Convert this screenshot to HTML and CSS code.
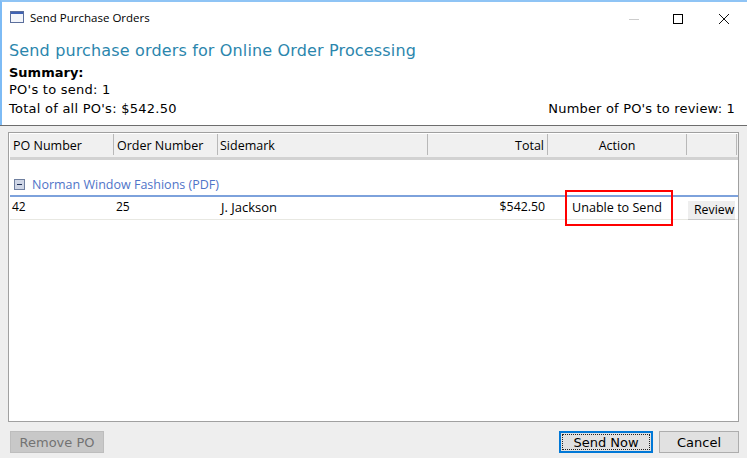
FILE: index.html
```html
<!DOCTYPE html>
<html lang="en">
<head>
<meta charset="utf-8">
<title>Send Purchase Orders</title>
<link rel="stylesheet" href="styles.css">
</head>
<body>
<div class="window">
  <div class="titlebar">
    <svg class="app-icon" width="16" height="14" viewBox="0 0 16 14"><rect x="0.5" y="0.5" width="13" height="11" fill="#f4f6fb" stroke="#5b6f9c"/><rect x="1" y="1" width="12" height="2" fill="#3f62b4"/></svg>
    <span class="title-text">Send Purchase Orders</span>
    <div class="win-controls">
      <svg class="ctl" width="46" height="30" viewBox="0 0 46 30"><line x1="18" y1="17.5" x2="28" y2="17.5" stroke="#ccc"/></svg>
      <svg class="ctl" width="46" height="30" viewBox="0 0 46 30"><rect x="17.5" y="12.5" width="9" height="9" fill="none" stroke="#000"/></svg>
      <svg class="ctl" width="46" height="30" viewBox="0 0 46 30"><path d="M18 12L28 22M28 12L18 22" stroke="#111" fill="none"/></svg>
    </div>
  </div>
  <header class="summary">
    <h1 class="heading">Send purchase orders for Online Order Processing</h1>
    <div class="sum-title">Summary:</div>
    <div class="sum-line">PO's to send: 1</div>
    <div class="sum-line sum-split"><span>Total of all PO's: $542.50</span><span class="sum-review">Number of PO's to review: 1</span></div>
  </header>
  <main class="content">
    <div class="grid">
      <div class="grid-head">
        <div class="hc c-po">PO Number</div>
        <div class="hc c-order">Order Number</div>
        <div class="hc c-side">Sidemark</div>
        <div class="hc c-total">Total</div>
        <div class="hc c-action">Action</div>
        <div class="hc c-btn"></div>
      </div>
      <div class="group">
        <svg class="minus" width="11" height="11" viewBox="0 0 11 11"><rect x="0.5" y="0.5" width="10" height="10" fill="#cfd6e6" stroke="#6f7f9f"/><line x1="3" y1="5.5" x2="8" y2="5.5" stroke="#1f2f55"/></svg>
        <span>Norman Window Fashions (PDF)</span>
      </div>
      <div class="row">
        <div class="cell c-po">42</div>
        <div class="cell c-order">25</div>
        <div class="cell c-side">J. Jackson</div>
        <div class="cell c-total">$542.50</div>
        <div class="cell c-action"><span class="flag">Unable to Send</span></div>
        <div class="cell c-btn"><button class="review" type="button">Review</button></div>
      </div>
    </div>
    <footer class="footer">
      <button class="btn btn-disabled" type="button">Remove PO</button>
      <div class="footer-right">
        <button class="btn btn-default" type="button"><span class="focus">Send Now</span></button>
        <button class="btn btn-plain" type="button">Cancel</button>
      </div>
    </footer>
  </main>
</div>
</body>
</html>
```
FILE: styles.css
```css
* { box-sizing: border-box; }
html, body { margin: 0; padding: 0; height: 100%; overflow: hidden; }
body { font-family: "DejaVu Sans", Verdana, sans-serif; font-size: 12px; color: #000; background: #fff; }
.window { width: 747px; height: 458px; border-top: 2px solid #8fc4f5; border-left: 2px solid #7dbbf5; display: flex; flex-direction: column; background: #fff; }
.titlebar { height: 30px; flex: none; display: flex; align-items: center; padding-left: 8px; }
.app-icon { flex: none; margin-top: 1px; }
.title-text { font-family: "Open Sans", sans-serif; font-size: 11.5px; margin-left: 4px; }
.win-controls { margin-left: auto; display: flex; }
.ctl { display: block; margin-left: -1px; }
.summary { height: 93px; flex: none; padding: 6px 12px 0 7px; }
.heading { margin: 0; font-weight: normal; font-size: 16px; letter-spacing: 0.15px; line-height: 26px; color: #2b86ad; }
.sum-title { font-weight: bold; font-size: 13px; line-height: 17px; margin-top: 0; }
.sum-line { line-height: 18px; font-size: 13px; letter-spacing: 0.25px; }
.sum-split { display: flex; justify-content: space-between; line-height: 20px; }
.sum-review { letter-spacing: 0.18px; }
.content { flex: 1; min-height: 0; background: #eee; border-top: 1px solid #6d6d6d; padding: 6px 8px 0 8px; display: flex; flex-direction: column; margin-left: -2px; }
.grid { height: 290px; flex: none; background: #fff; border: 1px solid #a0a0a0; padding: 1px 0 0 1px; }
.grid-head { height: 26px; display: flex; background: #f0f0f0; border-bottom: 3px solid #d2d2d2; font-family: "Open Sans", sans-serif; font-size: 12.5px; align-items: stretch; }
.hc { padding: 2px 3px 0; display: flex; align-items: center; border-right: 1px solid #b8b8b8; margin-bottom: 2px; }
.c-po { width: 104px; }
.c-order { width: 104px; }
.c-side { width: 210px; }
.c-total { width: 120px; justify-content: flex-end; }
.c-action { width: 139px; justify-content: center; }
.c-btn { width: 50px; }
.hc.c-side { padding-left: 2px; }
.hc.c-total { padding-right: 3px; }
.group { height: 37px; display: flex; align-items: flex-end; padding: 0 0 2px 4px; gap: 7px; color: #4f74c8; font-family: "Open Sans", sans-serif; font-size: 12.5px; border-bottom: 2px solid #7da2dc; }
.group span { line-height: 17px; }
.minus { margin-bottom: 3px; }
.row { height: 24px; margin-top: -1px; display: flex; align-items: center; border-bottom: 1px solid #e8e8e2; font-family: "Open Sans", sans-serif; font-size: 12px; }
.cell { padding: 0 2px 2px; display: flex; align-items: center; }
.cell.c-side { padding-left: 3px; font-size: 13px; }
.cell.c-total { padding-right: 3px; font-size: 12.3px; }
.cell.c-action { position: relative; height: 100%; padding: 0; }
.flag { position: absolute; left: 17px; top: -6px; width: 108px; height: 36px; border: 2px solid #f00; display: flex; align-items: center; padding: 0 0 1px 5px; font-size: 12.6px; }
.review { width: 50px; height: 19px; margin: 7px 0 0 -1px; padding: 0 0 0 6px; border: 0; border-bottom: 1px solid #c8c8c8; background: #eee; font: 12.3px "Open Sans", sans-serif; color: #000; text-align: left; }
.footer { flex: 1; display: flex; justify-content: space-between; align-items: flex-start; padding: 9px 0 0 2px; }
.footer-right { display: flex; gap: 6px; }
.btn { height: 22px; padding: 0; font-family: "DejaVu Sans", sans-serif; font-size: 13px; background: #e1e1e1; color: #000; border: 1px solid #adadad; }
.btn-disabled { width: 94px; background: #c8c8c8; border-color: #bdbdbd; color: #737373; }
.btn-default { width: 94px; border: 2px solid #0078d7; padding: 1px; }
.focus { display: flex; height: 100%; align-items: center; justify-content: center; border: 1px dotted #222; }
.btn-plain { width: 80px; }
```
